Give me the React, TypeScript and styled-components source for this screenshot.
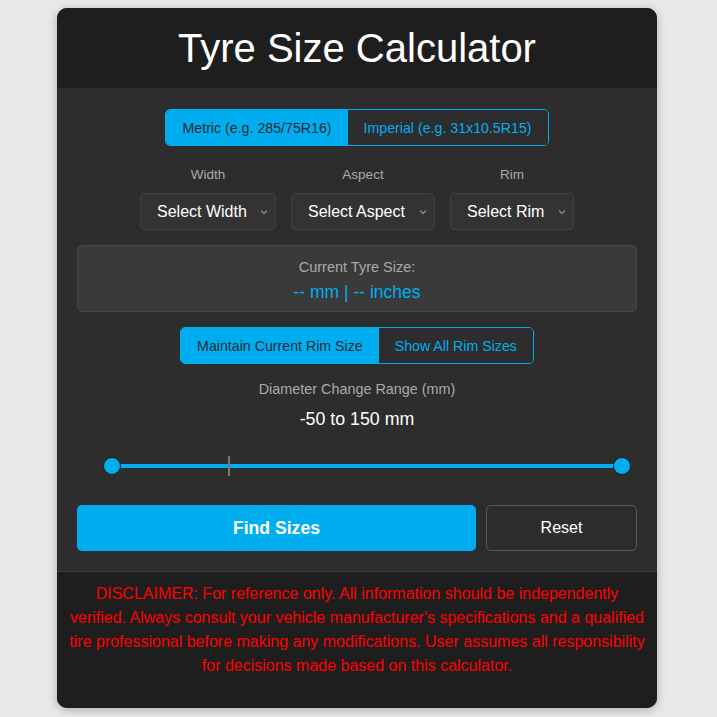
import React from 'react'
import styled, { createGlobalStyle } from 'styled-components'

const Global = createGlobalStyle`
  html, body {
    margin: 0;
    padding: 0;
    background: #e8e8e8;
    font-family: "Liberation Sans", Arial, sans-serif;
  }
  * { box-sizing: border-box; }
`

const Page = styled.div`
  padding: 8px 3px 8px 0;
  display: flex;
  justify-content: center;
`

const Card = styled.div`
  width: 600px;
  background: #2d2d2d;
  border-radius: 10px;
  overflow: hidden;
  box-shadow: 0 2px 10px rgba(0, 0, 0, 0.25);
`

const Header = styled.div`
  background: #1e1e1e;
  height: 80px;
  display: flex;
  align-items: center;
  justify-content: center;
  h1 {
    margin: 0;
    color: #fff;
    font-size: 40px;
    font-weight: 400;
  }
`

const Body = styled.div`
  padding: 21px 20px 20px;
  display: flex;
  flex-direction: column;
  align-items: center;
`

const Toggle = styled.div`
  display: flex;
  border: 1px solid #00aeef;
  border-radius: 5px;
  overflow: hidden;
`

const ToggleButton = styled.button<{ $active?: boolean }>`
  height: 35px;
  padding: 0 16px;
  border: none;
  font-family: inherit;
  font-size: 14.2px;
  background: ${p => (p.$active ? '#00aeef' : '#2d2d2d')};
  color: ${p => (p.$active ? '#1e2a33' : '#00aeef')};
`

const Selects = styled.div`
  display: flex;
  gap: 15px;
  margin-top: 21px;
`

const Field = styled.div`
  display: flex;
  flex-direction: column;
  align-items: center;
  gap: 10px;
  label {
    color: #aaa;
    font-size: 13.5px;
    line-height: 16px;
  }
`

const Select = styled.div<{ $w: number }>`
  width: ${p => p.$w}px;
  height: 37px;
  background: #333;
  border: 1px solid #404040;
  border-radius: 4px;
  color: #fff;
  font-size: 16px;
  display: flex;
  align-items: center;
  justify-content: space-between;
  padding: 0 6px 0 16px;
  svg { color: #888; }
`

const Info = styled.div`
  align-self: stretch;
  margin-top: 15px;
  height: 67px;
  padding-top: 3px;
  background: #3a3a3a;
  border: 1px solid #474747;
  border-radius: 5px;
  display: flex;
  flex-direction: column;
  align-items: center;
  justify-content: center;
  gap: 6px;
`

const InfoLabel = styled.div`
  color: #aaa;
  font-size: 14.5px;
  line-height: 17px;
`

const InfoValue = styled.div`
  color: #00aeef;
  font-size: 17.5px;
  line-height: 20px;
`

const Spaced = styled.div<{ $mt: number }>`
  margin-top: ${p => p.$mt}px;
`

const RangeLabel = styled.div`
  margin-top: 17px;
  color: #aaa;
  font-size: 14.4px;
  line-height: 17px;
`

const RangeValue = styled.div`
  margin-top: 11px;
  color: #fff;
  font-size: 17.8px;
  line-height: 20px;
`

const Slider = styled.div`
  align-self: stretch;
  position: relative;
  height: 20px;
  margin: 27px 6px 0 26px;
`

const Track = styled.div`
  position: absolute;
  left: 9px;
  right: 9px;
  top: 8px;
  height: 4px;
  background: #00aeef;
`

const Tick = styled.div`
  position: absolute;
  top: 0;
  width: 2px;
  height: 20px;
  background: #777;
`

const Thumb = styled.div`
  position: absolute;
  top: 1px;
  width: 18px;
  height: 18px;
  border-radius: 50%;
  background: #00aeef;
  border: 1.5px solid #1e1e1e;
`

const Actions = styled.div`
  align-self: stretch;
  display: flex;
  gap: 10px;
  margin-top: 29px;
`

const Primary = styled.button`
  flex: 1;
  height: 46px;
  border: none;
  border-radius: 5px;
  background: #00aeef;
  color: #fff;
  font-family: inherit;
  font-weight: 700;
  font-size: 17.6px;
`

const Secondary = styled.button`
  width: 151px;
  height: 46px;
  border: 1px solid #5a5a5a;
  border-radius: 5px;
  background: #2d2d2d;
  color: #fff;
  font-family: inherit;
  font-size: 16px;
`

const Footer = styled.div`
  background: #1e1e1e;
  border-top: 1px solid #3a3a3a;
  padding: 10px 12px 30px;
  text-align: center;
  color: #f00;
  font-size: 16px;
  line-height: 24px;
`

const Chevron = () => (
  <svg width="10" height="10" viewBox="0 0 10 10" fill="none" stroke="currentColor" strokeWidth="1.3">
    <path d="M2 3.5 L5 6.5 L8 3.5" />
  </svg>
)

export default function App() {
  return (
    <>
      <Global />
      <Page>
        <Card>
          <Header>
            <h1>Tyre Size Calculator</h1>
          </Header>
          <Body>
            <Toggle>
              <ToggleButton $active>Metric (e.g. 285/75R16)</ToggleButton>
              <ToggleButton>Imperial (e.g. 31x10.5R15)</ToggleButton>
            </Toggle>
            <Selects>
              <Field>
                <label>Width</label>
                <Select $w={136}>Select Width<Chevron /></Select>
              </Field>
              <Field>
                <label>Aspect</label>
                <Select $w={144}>Select Aspect<Chevron /></Select>
              </Field>
              <Field>
                <label>Rim</label>
                <Select $w={124}>Select Rim<Chevron /></Select>
              </Field>
            </Selects>
            <Info>
              <InfoLabel>Current Tyre Size:</InfoLabel>
              <InfoValue>-- mm | -- inches</InfoValue>
            </Info>
            <Spaced $mt={15}>
              <Toggle>
                <ToggleButton $active>Maintain Current Rim Size</ToggleButton>
                <ToggleButton>Show All Rim Sizes</ToggleButton>
              </Toggle>
            </Spaced>
            <RangeLabel>Diameter Change Range (mm)</RangeLabel>
            <RangeValue>-50 to 150 mm</RangeValue>
            <Slider>
              <Track />
              <Tick style={{ left: '125px' }} />
              <Thumb style={{ left: 0 }} />
              <Thumb style={{ right: 0 }} />
            </Slider>
            <Actions>
              <Primary>Find Sizes</Primary>
              <Secondary>Reset</Secondary>
            </Actions>
          </Body>
          <Footer>
            DISCLAIMER: For reference only. All information should be independently verified. Always consult your
            vehicle manufacturer's specifications and a qualified tire professional before making any modifications.
            User assumes all responsibility for decisions made based on this calculator.
          </Footer>
        </Card>
      </Page>
    </>
  )
}
